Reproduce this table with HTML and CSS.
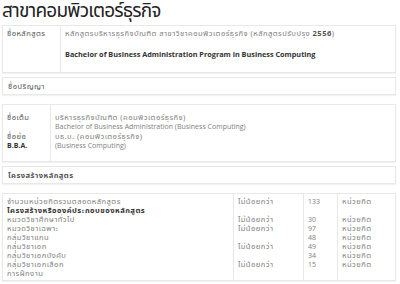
FILE: index.html
```html
<!DOCTYPE html>
<html lang="th">
<head>
<meta charset="utf-8">
<link rel="stylesheet" href="styles.css">
</head>
<body>
<h1 class="title">สาขาคอมพิวเตอร์ธุรกิจ</h1>

<div class="panel">
  <table class="grid course">
    <tr>
      <td class="label c-course"><div class="ln">ชื่อหลักสูตร</div></td>
      <td>
        <div class="ln first">หลักสูตรบริหารธุรกิจบัณฑิต สาขาวิชาคอมพิวเตอร์ธุรกิจ (หลักสูตรปรับปรุง <b class="num">2556</b>)</div>
        <div class="ln en strong big">Bachelor of Business Administration Program in Business Computing</div>
      </td>
    </tr>
  </table>
</div>

<div class="panel head"><div class="ln">ชื่อปริญญา</div></div>

<div class="panel">
  <table class="grid degree">
    <tr class="r1">
      <td class="label c-degree"><div class="ln">ชื่อเต็ม</div></td>
      <td>
        <div class="ln">บริหารธุรกิจบัณฑิต (คอมพิวเตอร์ธุรกิจ)</div>
        <div class="ln en">Bachelor of Business Administration (Business Computing)</div>
      </td>
    </tr>
    <tr class="r2">
      <td class="label">
        <div class="ln">ชื่อย่อ</div>
        <div class="ln en strong">B.B.A.</div>
      </td>
      <td>
        <div class="ln">บธ.บ. (คอมพิวเตอร์ธุรกิจ)</div>
        <div class="ln en">(Business Computing)</div>
      </td>
    </tr>
  </table>
</div>

<div class="panel head strong"><div class="ln">โครงสร้างหลักสูตร</div></div>

<div class="panel">
  <table class="grid struct">
    <tr class="top"><td class="c1">จำนวนหน่วยกิตรวมตลอดหลักสูตร</td><td class="c2">ไม่น้อยกว่า</td><td class="c3 en">133</td><td>หน่วยกิต</td></tr>
    <tr><td class="c1 strong">โครงสร้างหรือองค์ประกอบของหลักสูตร</td><td class="c2"></td><td class="c3"></td><td></td></tr>
    <tr><td class="c1">หมวดวิชาศึกษาทั่วไป</td><td class="c2">ไม่น้อยกว่า</td><td class="c3 en">30</td><td>หน่วยกิต</td></tr>
    <tr><td class="c1">หมวดวิชาเฉพาะ</td><td class="c2">ไม่น้อยกว่า</td><td class="c3 en">97</td><td>หน่วยกิต</td></tr>
    <tr><td class="c1">กลุ่มวิชาแกน</td><td class="c2"></td><td class="c3 en">48</td><td>หน่วยกิต</td></tr>
    <tr><td class="c1">กลุ่มวิชาเอก</td><td class="c2">ไม่น้อยกว่า</td><td class="c3 en">49</td><td>หน่วยกิต</td></tr>
    <tr><td class="c1">กลุ่มวิชาเอกบังคับ</td><td class="c2"></td><td class="c3 en">34</td><td>หน่วยกิต</td></tr>
    <tr><td class="c1">กลุ่มวิชาเอกเลือก</td><td class="c2">ไม่น้อยกว่า</td><td class="c3 en">15</td><td>หน่วยกิต</td></tr>
    <tr class="bottom"><td class="c1">การฝึกงาน</td><td class="c2"></td><td class="c3"></td><td></td></tr>
  </table>
</div>
</body>
</html>
```

FILE: styles.css
```css
body {
  margin: 0;
  padding: 0 4px 0 2px;
  font-family: "Noto Sans Thai", "Noto Sans", sans-serif;
  font-size: 7.6px;
  letter-spacing: 0.45px;
  line-height: 9px;
  color: #808080;
  background: #fff;
}
.title {
  margin: 0 0 1px;
  font-size: 19px;
  letter-spacing: -0.8px;
  line-height: 24px;
  font-weight: 400;
  color: #222;
  white-space: nowrap;
}
.ln {
  height: 9px;
  line-height: 9px;
  white-space: nowrap;
}
.en {
  font-family: "Open Sans", "Noto Sans", sans-serif;
  font-size: 7px;
  letter-spacing: 0;
}
.en.big { font-size: 7.3px; }
.num { font-weight: 700; color: #555; }
.strong {
  font-weight: 700;
  color: #333;
}
.panel {
  border: 1px solid #e8e8e8;
  box-shadow: 0 1px 1px rgba(0, 0, 0, 0.05);
  margin-bottom: 4px;
}
.head {
  padding: 4px 5px 3px;
  margin-bottom: 9px;
  color: #555;
}
.grid {
  width: 100%;
  border-collapse: collapse;
}
.grid td {
  vertical-align: top;
  padding: 0 4px;
}
.grid td + td { border-left: 1px solid #e8e8e8; }
.label { color: #555; }

.course td { padding-top: 3px; padding-bottom: 13px; }
.c-course { width: 49px; }
.course .first { margin-bottom: 12px; }

.c-degree { width: 39px; }
.degree .r1 td { padding-top: 8px; padding-bottom: 1px; }
.degree .r2 td { padding-bottom: 11px; }

.struct td { height: 9px; line-height: 9px; white-space: nowrap; }
.struct .top td { padding-top: 3px; }
.struct .bottom td { padding-bottom: 2px; }
.struct .c1 { width: 222px; }
.struct .c2 { width: 61px; }
.struct .c3 { width: 25px; }
```
